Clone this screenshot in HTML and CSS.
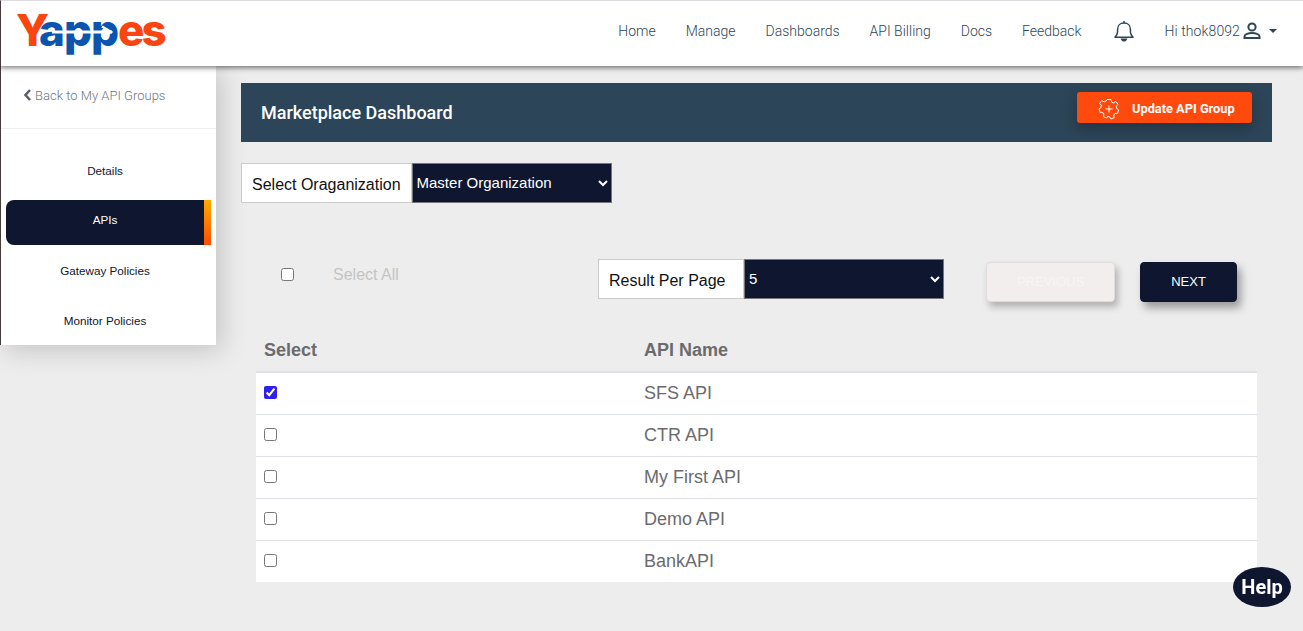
FILE: index.html
```html
<!DOCTYPE html>
<html lang="en">
  <head>
    <meta charset="UTF-8" />
    <meta name="viewport" content="width=device-width, initial-scale=1.0" />
    <title>Marketplace Dashboard</title>
    <link rel="stylesheet" href="styles.css">
  </head>
  <body>
    <!-- Top bar -->
    <header class="topbar">
      <a class="logo" href="#">
        <span class="logo-y">Y</span><span class="logo-app">app</span><span class="logo-es">es</span>
        <svg class="logo-arrow" width="66" height="14" viewBox="0 0 66 14" fill="none" stroke="#fff">
          <path d="M0 7h60" stroke-width="3" />
          <path d="M50 1.500 59 7l-9 5.500" stroke-width="2.500" />
        </svg>
      </a>
      <nav class="topnav">
        <a href="#">Home</a>
        <a href="#">Manage</a>
        <a href="#">Dashboards</a>
        <a href="#">API Billing</a>
        <a href="#">Docs</a>
        <a href="#">Feedback</a>
      </nav>
      <svg class="bell" width="22" height="22" viewBox="0 0 22 22" fill="none" stroke="#2c4656" stroke-width="1.5">
        <path d="M2 17.2c1.6-1.5 2.6-2.8 2.6-5.4V9.2C4.600 5.600 7.300 3 11 3s6.400 2.600 6.400 6.200v2.600c0 2.600 1 3.900 2.600 5.400z" stroke-linejoin="round" />
        <path d="M11 1v2" />
        <path d="M8.800 19.300c.5 1 1.200 1.500 2.200 1.500s1.700-.5 2.200-1.500z" fill="#2c4656" />
      </svg>
      <div class="user">
        <span>Hi thok8092</span>
        <svg width="20" height="20" viewBox="0 0 20 20" fill="none" stroke="#2c4656" stroke-width="2">
          <circle cx="10" cy="6" r="3.600" />
          <path d="M2.500 17v-1.500c0-2.300 4-3.500 7.500-3.500s7.500 1.200 7.500 3.500V17z" />
        </svg>
        <i class="caret"></i>
      </div>
    </header>

    <div class="page">
      <!-- Sidebar -->
      <aside class="sidebar">
        <a class="back" href="#">
          <svg width="9" height="12" viewBox="0 0 9 12"><path d="M7 1 2.500 6 7 11" fill="none" stroke="#5b6168" stroke-width="2.600" /></svg>
          Back to My API Groups
        </a>
        <ul class="side-menu">
          <li>Details</li>
          <li class="active">APIs</li>
          <li>Gateway Policies</li>
          <li>Monitor Policies</li>
        </ul>
      </aside>

      <main class="content">
        <div class="banner">
          <h2>Marketplace Dashboard</h2>
          <button class="update-btn" type="button">
            <svg width="22" height="22" viewBox="0 0 22 22" fill="none" stroke="#fff" stroke-width="1">
              <path d="M9 1.500h4l.6 2.600 1.900.8 2.300-1.400 2.200 2.800-1.700 2 .3 2.200 2 1.400-1 3.400-2.600.1-1.300 1.700.5 2.600-3.300 1.200-1.500-2.200h-2.200L8.700 19.900l-3.300-1.200.5-2.600-1.300-1.700-2.600-.1-1-3.400 2-1.400.3-2.200-1.700-2 2.200-2.800 2.300 1.400 1.900-.8z" stroke-linejoin="round" />
              <path d="M11 7.500v7M7.500 11h7" />
            </svg>
            <span>Update API Group</span>
          </button>
        </div>

        <div class="field org-field">
          <label class="field-label" for="org">Select Oraganization</label>
          <select class="field-select" id="org">
            <option>Master Organization</option>
          </select>
        </div>

        <div class="toolbar">
          <input class="select-all" type="checkbox" id="all" />
          <label class="select-all-label" for="all">Select All</label>
          <div class="field per-page">
            <label class="field-label" for="perPage">Result Per Page</label>
            <select class="field-select" id="perPage">
              <option>5</option>
            </select>
          </div>
          <button class="page-btn prev" type="button">PREVIOUS</button>
          <button class="page-btn next" type="button">NEXT</button>
        </div>

        <table class="api-table">
          <thead>
            <tr>
              <th>Select</th>
              <th>API Name</th>
            </tr>
          </thead>
          <tbody>
            <tr><td><input type="checkbox" checked /></td><td>SFS API</td></tr>
            <tr><td><input type="checkbox" /></td><td>CTR API</td></tr>
            <tr><td><input type="checkbox" /></td><td>My First API</td></tr>
            <tr><td><input type="checkbox" /></td><td>Demo API</td></tr>
            <tr><td><input type="checkbox" /></td><td>BankAPI</td></tr>
          </tbody>
        </table>
      </main>
    </div>

    <a class="help" href="#">Help</a>
  </body>
</html>
```

FILE: styles.css
```css
* {
  box-sizing: border-box;
  margin: 0;
  padding: 0;
}

html,
body {
  height: 631px;
  overflow: hidden;
}

body {
  font-family: "Liberation Sans", Arial, sans-serif;
  background-color: #ededed;
  color: #333;
}

a {
  text-decoration: none;
}

/* top bar */
.topbar {
  position: relative;
  z-index: 2;
  height: 66px;
  display: flex;
  align-items: center;
  background-color: #fff;
  border-top: 1px solid #dcdce0;
  border-left: 1px solid #443c3c;
  box-shadow: 0 2px 5px rgba(0, 0, 0, 0.5);
  padding-left: 15px;
  padding-right: 26px;
  padding-bottom: 6px;
}

.logo {
  position: relative;
  display: flex;
  font-family: Inter, sans-serif;
  font-size: 44px;
  font-weight: 800;
  line-height: 50px;
  margin-top: -2px;
  white-space: nowrap;
}

.logo-y,
.logo-es {
  color: #fb4510;
}

.logo-y {
  letter-spacing: -10px;
}

.logo-app {
  color: #0b55b0;
  letter-spacing: -1px;
}

.logo-es {
  letter-spacing: -3px;
}

.logo-arrow {
  position: absolute;
  left: 36px;
  top: 20px;
}

.topnav {
  margin-left: auto;
  display: flex;
  gap: 30px;
  font-family: Roboto, sans-serif;
  font-size: 14px;
  font-weight: 300;
}

.topnav a {
  color: #2c4656;
}

.bell {
  margin-left: 32px;
}

.user {
  display: flex;
  align-items: center;
  margin-left: 29px;
  font-family: Roboto, sans-serif;
  font-size: 14px;
  font-weight: 300;
  letter-spacing: 0.1px;
  color: #2c4656;
}

.user svg {
  margin-left: 2px;
}

.caret {
  margin-left: 7px;
  border-top: 4px solid #2c4656;
  border-left: 4px solid transparent;
  border-right: 4px solid transparent;
}

/* page columns */
.page {
  display: flex;
  align-items: flex-start;
}

.sidebar {
  width: 216px;
  height: 279px;
  flex-shrink: 0;
  background-color: #fff;
  border-left: 1px solid #443c3c;
  box-shadow: 5px 5px 25px rgba(0, 0, 0, 0.18);
}

.back {
  display: flex;
  align-items: center;
  gap: 3px;
  height: 63px;
  padding-left: 22px;
  padding-bottom: 4px;
  border-bottom: 1px solid #eee;
  font-family: Roboto, sans-serif;
  font-size: 13px;
  font-weight: 300;
  color: #6f7480;
}

.side-menu {
  list-style: none;
  padding-top: 16px;
}

.side-menu li {
  height: 50px;
  width: 208px;
  display: flex;
  align-items: center;
  justify-content: center;
  font-size: 11.700px;
  color: #0e1630;
}

.side-menu .active {
  height: 45px;
  width: 205px;
  margin-top: 5px;
  margin-left: 5px;
  padding-bottom: 6px;
  border-radius: 8px 0 0 8px;
  background-color: #0e1630;
  border-right: 7px solid;
  border-image: linear-gradient(#ffae00, #ff4a00) 1;
  color: #fff;
}

/* main column */
.content {
  width: 1031px;
  margin-left: 25px;
  padding-top: 17px;
}

.banner {
  height: 59px;
  display: flex;
  align-items: center;
  justify-content: space-between;
  padding-left: 20px;
  padding-right: 20px;
  background-color: #2c4558;
}

.banner h2 {
  font-family: Roboto, sans-serif;
  font-size: 18px;
  font-weight: 500;
  color: #fff;
}

.update-btn {
  width: 175px;
  height: 31px;
  margin-top: -11px;
  display: flex;
  align-items: center;
  padding-left: 21px;
  padding-top: 3px;
  gap: 12px;
  border: none;
  border-radius: 3px;
  background-color: #ff4a0d;
  box-shadow: 0 5px 14px rgba(0, 0, 0, 0.25);
  color: #fff;
  font-family: Roboto, sans-serif;
  font-size: 12.800px;
  font-weight: 700;
}

.field {
  display: flex;
  height: 40px;
}

.org-field {
  margin-top: 21px;
}

.field-label {
  display: flex;
  align-items: center;
  padding-left: 10px;
  padding-right: 10px;
  padding-top: 4px;
  background-color: #fff;
  border: 1px solid #ccc;
  font-size: 16px;
  color: #111;
}

.per-page .field-label {
  width: 146px;
}

.field-select {
  width: 200px;
  padding-bottom: 1px;
  background-color: #0e1630;
  border: 1px solid #767676;
  border-radius: 0;
  color: #fff;
  font-family: "Liberation Sans", Arial, sans-serif;
  font-size: 15px;
}

.toolbar {
  display: flex;
  align-items: center;
  height: 40px;
  margin-top: 56px;
}

.select-all {
  width: 13px;
  height: 13px;
  margin-left: 40px;
  margin-bottom: 10px;
}

.select-all-label {
  margin-left: 39px;
  width: 265px;
  margin-bottom: 9px;
  font-size: 16px;
  color: #c4c4c4;
}

.page-btn {
  height: 40px;
  margin-top: 5px;
  border-radius: 4px;
  font-family: "Liberation Sans", Arial, sans-serif;
  font-size: 13px;
  box-shadow: 4px 6px 8px rgba(0, 0, 0, 0.35);
}

.prev {
  width: 129px;
  margin-left: 42px;
  background-color: #f1eeed;
  border: 1px solid #ddd;
  color: #f7f5f4;
  box-shadow: 3px 5px 7px rgba(0, 0, 0, 0.25);
}

.next {
  width: 97px;
  margin-left: 25px;
  background-color: #0e1630;
  border: 1px solid #0e1630;
  color: #fff;
}

.api-table {
  width: 1001px;
  margin-top: 31px;
  margin-left: 15px;
  border-collapse: collapse;
  font-size: 18px;
  color: #6b6b6e;
}

.api-table th {
  height: 42px;
  padding-left: 8px;
  text-align: left;
  border-bottom: 2px solid #dee2e6;
}

.api-table th:first-child,
.api-table td:first-child {
  width: 380px;
}

.api-table td {
  height: 42px;
  padding-left: 8px;
  background-color: #fff;
  border-top: 1px solid #dee2e6;
}

.api-table input {
  display: block;
  width: 13px;
  height: 13px;
  margin-top: -2px;
  accent-color: #2f1ff0;
}

.help {
  position: fixed;
  right: 12px;
  bottom: 24px;
  width: 58px;
  height: 40px;
  display: flex;
  align-items: center;
  justify-content: center;
  border-radius: 50%;
  background-color: #0e1630;
  color: #fff;
  font-family: Roboto, sans-serif;
  font-size: 20px;
  font-weight: 700;
}
```
